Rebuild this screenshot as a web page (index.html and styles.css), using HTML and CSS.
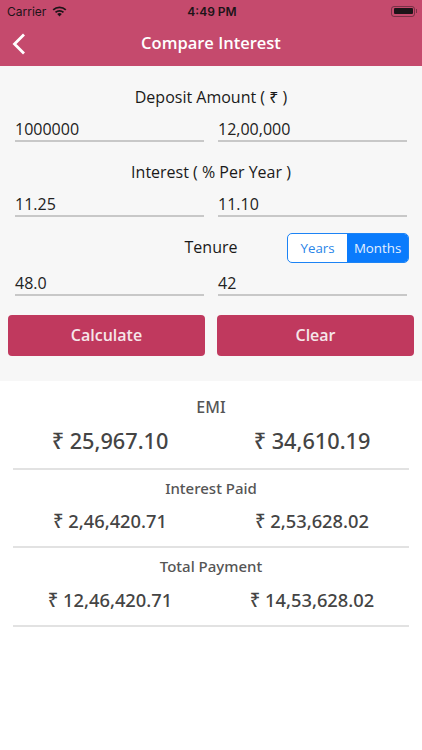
FILE: index.html
```html
<!DOCTYPE html>
<html lang="en">
<head>
    <meta charset="UTF-8">
    <meta name="viewport" content="width=device-width, initial-scale=1.0">
    <title>Compare Interest</title>
    <link rel="stylesheet" href="styles.css">
</head>
<body>
    <div class="header">
        <div class="status-bar">
            <div class="status-left">
                <span>Carrier</span>
                <svg class="wifi" width="15" height="11" viewBox="0 0 15 11">
                    <path d="M7.5 10.6 L5.2 8.1 A3.3 3.3 0 0 1 9.8 8.1 Z" fill="#1c1418"/>
                    <path d="M3.5 6.4 A5.8 5.8 0 0 1 11.5 6.4" fill="none" stroke="#1c1418" stroke-width="1.7"/>
                    <path d="M1.2 3.9 A9 9 0 0 1 13.8 3.9" fill="none" stroke="#1c1418" stroke-width="1.7"/>
                </svg>
            </div>
            <div class="status-time">4:49 PM</div>
            <div class="status-right">
                <div class="battery"><div class="battery-level"></div></div>
                <div class="battery-tip"></div>
            </div>
        </div>
        <div class="nav-bar">
            <svg class="back" width="14" height="22" viewBox="0 0 14 22">
                <path d="M12 1.5 L2.5 11 L12 20.5" fill="none" stroke="#fff" stroke-width="2.8"/>
            </svg>
            <h1>Compare Interest</h1>
        </div>
    </div>

    <form class="form">
        <div class="label">Deposit Amount ( ₹ )</div>
        <div class="inputs">
            <div class="field">1000000</div>
            <div class="field">12,00,000</div>
        </div>

        <div class="label label-interest">Interest ( % Per Year )</div>
        <div class="inputs">
            <div class="field">11.25</div>
            <div class="field">11.10</div>
        </div>

        <div class="tenure-row">
            <div class="label">Tenure</div>
            <div class="segment">
                <div class="segment-item">Years</div>
                <div class="segment-item active">Months</div>
            </div>
        </div>
        <div class="inputs">
            <div class="field">48.0</div>
            <div class="field">42</div>
        </div>

        <div class="buttons">
            <button type="button">Calculate</button>
            <button type="button">Clear</button>
        </div>
    </form>

    <div class="results">
        <div class="result result-emi">
            <div class="result-title">EMI</div>
            <div class="result-values">
                <div>₹ 25,967.10</div>
                <div>₹ 34,610.19</div>
            </div>
        </div>
        <div class="result">
            <div class="result-title">Interest Paid</div>
            <div class="result-values">
                <div>₹ 2,46,420.71</div>
                <div>₹ 2,53,628.02</div>
            </div>
        </div>
        <div class="result result-total">
            <div class="result-title">Total Payment</div>
            <div class="result-values">
                <div>₹ 12,46,420.71</div>
                <div>₹ 14,53,628.02</div>
            </div>
        </div>
    </div>
</body>
</html>
```

FILE: styles.css
```css
body {
    font-family: "Open Sans", "Noto Sans", sans-serif;
    background-color: #fff;
    margin: 0;
    padding: 0;
    height: 750px;
    overflow: hidden;
}
.header {
    background-color: #c54a6d;
    height: 66px;
}
.status-bar {
    display: grid;
    grid-template-columns: 1fr auto 1fr;
    align-items: center;
    height: 22px;
    padding: 0 5px 0 7px;
    font-family: Inter, sans-serif;
    font-size: 12px;
    color: #1c1418;
}
.status-left {
    display: flex;
    align-items: center;
    gap: 6px;
}
.status-time {
    font-weight: 600;
}
.status-right {
    display: flex;
    align-items: center;
    justify-content: flex-end;
}
.battery {
    width: 24px;
    height: 11px;
    box-sizing: border-box;
    padding: 1.5px;
    border: 1px solid rgba(28, 20, 24, 0.45);
    border-radius: 3px;
}
.battery-level {
    height: 100%;
    background-color: #1c1418;
    border-radius: 1px;
}
.battery-tip {
    width: 1px;
    height: 4px;
    margin-left: 1px;
    background-color: rgba(28, 20, 24, 0.45);
}
.nav-bar {
    position: relative;
    height: 44px;
    display: flex;
    align-items: center;
    justify-content: center;
}
.nav-bar h1 {
    margin: 0 0 3px;
    font-size: 16.5px;
    font-weight: 600;
    color: #fff;
}
.back {
    position: absolute;
    left: 12px;
    top: 11px;
}
.form {
    background-color: #f7f7f7;
    height: 315px;
    box-sizing: border-box;
    padding-top: 20px;
}
.label {
    text-align: center;
    font-size: 16px;
    line-height: 22px;
    color: #1a1a1a;
}
.label-interest {
    margin-top: 19px;
}
.inputs {
    display: flex;
    gap: 14px;
    padding: 0 15px;
    margin-top: 10px;
}
.field {
    flex: 1;
    font-size: 16px;
    line-height: 22px;
    color: #222;
    border-bottom: 2px solid #c8c8c8;
}
.tenure-row {
    position: relative;
    margin-top: 16px;
    height: 30px;
    display: flex;
    align-items: center;
    justify-content: center;
}
.tenure-row .label {
    margin-bottom: 2px;
}
.tenure-row + .inputs {
    margin-top: 9px;
}
.segment {
    position: absolute;
    left: 287px;
    top: 0;
    width: 122px;
    height: 30px;
    box-sizing: border-box;
    display: flex;
    border: 1px solid #1c83f5;
    border-radius: 5px;
    overflow: hidden;
    font-size: 13.3px;
    background-color: #fff;
    color: #2a85e8;
}
.segment-item {
    flex: 1;
    display: flex;
    align-items: center;
    justify-content: center;
    padding-bottom: 1px;
}
.segment-item.active {
    flex: 1.03;
    background-color: #0a7bfc;
    color: #e4f0ff;
}
.buttons {
    display: flex;
    gap: 12px;
    padding: 0 8px 0 8px;
    margin-top: 19px;
}
button {
    flex: 1;
    height: 41px;
    padding: 0 0 2px;
    font-family: inherit;
    font-size: 16px;
    font-weight: 600;
    color: #f6e6ea;
    background-color: #c0395e;
    border: none;
    border-radius: 4px;
}
.results {
    padding: 0 13px;
}
.result {
    height: 78px;
    box-sizing: border-box;
    padding-top: 7px;
    border-bottom: 2px solid #e2e2e2;
    text-align: center;
    color: #444;
}
.result-emi {
    height: 89px;
    padding-top: 15px;
}
.result-total {
    height: 79px;
}
.result-title {
    font-family: "Noto Sans", "Open Sans", sans-serif;
    font-size: 15px;
    font-weight: 500;
    line-height: 22px;
    color: #555;
}
.result-emi .result-title {
    font-size: 16px;
}
.result-values {
    display: grid;
    grid-template-columns: 1fr 1fr;
    margin: 10px -4px 0;
    font-family: "Noto Sans", "Open Sans", sans-serif;
    font-size: 18.3px;
    font-weight: 500;
    line-height: 24px;
}
.result-emi .result-values {
    margin-top: 11px;
    font-size: 21.7px;
}
.result-total .result-values {
    margin-top: 11px;
}
```
